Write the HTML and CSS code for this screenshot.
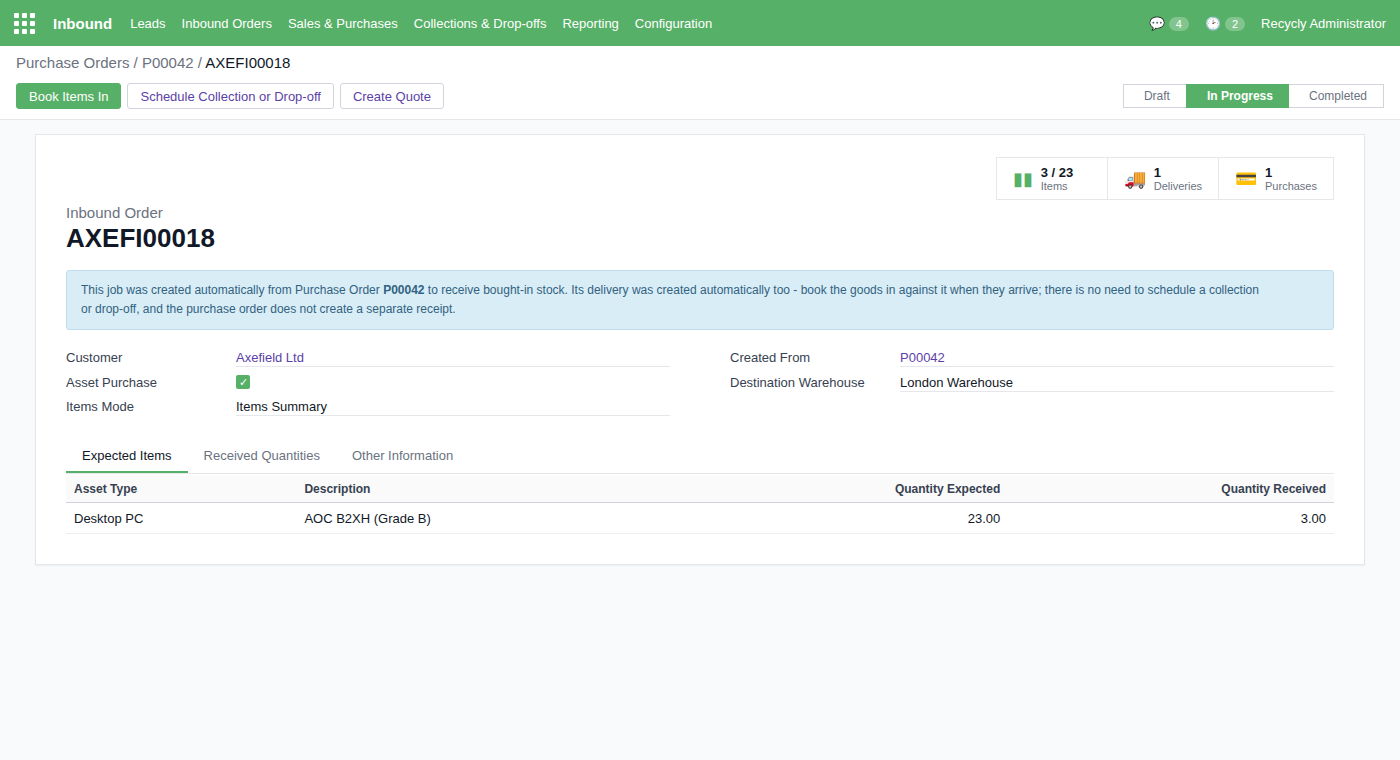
FILE: index.html
```html
<!DOCTYPE html>
<html lang="en">
<head>
<meta charset="UTF-8">
<meta name="viewport" content="width=device-width, initial-scale=1.0">
<title>AXEFI00018 - Inbound</title>
<link rel="stylesheet" href="styles.css">
</head>
<body>
  <!-- Top navigation -->
  <header class="navbar">
    <button type="button" class="apps" aria-label="Apps">
      <span></span><span></span><span></span>
      <span></span><span></span><span></span>
      <span></span><span></span><span></span>
    </button>
    <a class="brand" href="#">Inbound</a>
    <nav class="menu">
      <a href="#">Leads</a>
      <a href="#">Inbound Orders</a>
      <a href="#">Sales &amp; Purchases</a>
      <a href="#">Collections &amp; Drop-offs</a>
      <a href="#">Reporting</a>
      <a href="#">Configuration</a>
    </nav>
    <div class="systray">
      <a class="tray-item" href="#">💬 <span class="badge">4</span></a>
      <a class="tray-item" href="#">🕑 <span class="badge">2</span></a>
      <a href="#">Recycly Administrator</a>
    </div>
  </header>

  <!-- Breadcrumb, actions and status -->
  <div class="control-panel">
    <div class="breadcrumb">
      <a href="#">Purchase Orders</a> / <a href="#">P00042</a> / <span class="current">AXEFI00018</span>
    </div>
    <div class="actions">
      <div class="buttons">
        <button type="button" class="btn btn-primary">Book Items In</button>
        <button type="button" class="btn">Schedule Collection or Drop-off</button>
        <button type="button" class="btn">Create Quote</button>
      </div>
      <div class="statusbar">
        <button type="button" class="status">Draft</button>
        <button type="button" class="status active">In Progress</button>
        <button type="button" class="status">Completed</button>
      </div>
    </div>
  </div>

  <main class="sheet">
    <div class="stats">
      <button type="button" class="stat">
        <span class="stat-icon">▮▮</span>
        <span class="stat-text"><strong>3 / 23</strong><span>Items</span></span>
      </button>
      <button type="button" class="stat">
        <span class="stat-icon">🚚</span>
        <span class="stat-text"><strong>1</strong><span>Deliveries</span></span>
      </button>
      <button type="button" class="stat">
        <span class="stat-icon">💳</span>
        <span class="stat-text"><strong>1</strong><span>Purchases</span></span>
      </button>
    </div>

    <div class="subtitle">Inbound Order</div>
    <h1>AXEFI00018</h1>

    <div class="alert">
      This job was created automatically from Purchase Order <strong>P00042</strong> to receive bought-in stock. Its delivery was created automatically too - book the goods in against it when they arrive; there is no need to schedule a collection <span class="nowrap">or drop-off,</span> and the purchase order does not create a separate receipt.
    </div>

    <!-- Order details -->
    <div class="groups">
      <div class="group">
        <div class="field">
          <span class="label">Customer</span>
          <a class="value" href="#">Axefield Ltd</a>
        </div>
        <div class="field">
          <label class="label" for="assetPurchase">Asset Purchase</label>
          <input type="checkbox" id="assetPurchase" class="check" checked>
        </div>
        <div class="field">
          <span class="label">Items Mode</span>
          <span class="value">Items Summary</span>
        </div>
      </div>
      <div class="group">
        <div class="field">
          <span class="label">Created From</span>
          <a class="value" href="#">P00042</a>
        </div>
        <div class="field">
          <span class="label">Destination Warehouse</span>
          <span class="value">London Warehouse</span>
        </div>
      </div>
    </div>

    <div class="tabs" role="tablist">
      <button type="button" class="tab active" role="tab" aria-selected="true">Expected Items</button>
      <button type="button" class="tab" role="tab" aria-selected="false">Received Quantities</button>
      <button type="button" class="tab" role="tab" aria-selected="false">Other Information</button>
    </div>

    <table class="items">
      <thead>
        <tr>
          <th>Asset Type</th>
          <th>Description</th>
          <th class="num">Quantity Expected</th>
          <th class="num">Quantity Received</th>
        </tr>
      </thead>
      <tbody>
        <tr>
          <td>Desktop PC</td>
          <td>AOC B2XH (Grade B)</td>
          <td class="num">23.00</td>
          <td class="num">3.00</td>
        </tr>
      </tbody>
    </table>
  </main>
</body>
</html>
```
FILE: styles.css
```css
* {
  box-sizing: border-box;
}

body {
  margin: 0;
  font-family: "Liberation Sans", Arial, sans-serif;
  font-size: 13px;
  color: #111827;
  background-color: #f9fafb;
}

a {
  color: #5b3fa8;
  text-decoration: none;
}

button {
  font-family: inherit;
  cursor: pointer;
}

/* Navbar */
.navbar {
  display: flex;
  align-items: center;
  gap: 18px;
  height: 46px;
  padding: 0 14px;
  background-color: #57b067;
  color: #ffffff;
}

.navbar a {
  color: #ffffff;
}

.apps {
  display: grid;
  grid-template-columns: repeat(3, 5px);
  gap: 3px;
  padding: 0;
  border: none;
  background: none;
}

.apps span {
  height: 5px;
  border-radius: 1px;
  background-color: #ffffff;
}

.brand {
  font-size: 15px;
  font-weight: bold;
}

.menu,
.systray {
  display: flex;
  align-items: center;
  gap: 16px;
}

.systray {
  margin-left: auto;
}

.tray-item {
  display: flex;
  align-items: baseline;
  gap: 4px;
}

.badge {
  padding: 0 7px;
  border-radius: 8px;
  background-color: rgba(255, 255, 255, 0.25);
  font-size: 11px;
  line-height: 14px;
}

/* Control panel */
.control-panel {
  padding: 8px 16px 10px;
  border-bottom: 1px solid #e5e7eb;
  background-color: #ffffff;
}

.breadcrumb {
  margin-bottom: 12px;
  font-size: 15px;
  line-height: 17px;
  color: #6b7280;
}

.breadcrumb a {
  color: #6b7280;
}

.breadcrumb .current {
  color: #111827;
}

.actions {
  display: flex;
  justify-content: space-between;
  align-items: center;
}

.buttons {
  display: flex;
  gap: 6px;
}

.btn {
  height: 26px;
  padding: 0 12px;
  border: 1px solid #d1d5db;
  border-radius: 3px;
  background-color: #ffffff;
  color: #5b3fa8;
  font-size: 13px;
}

.btn-primary {
  border-color: #57b067;
  background-color: #57b067;
  color: #ffffff;
}

.statusbar {
  display: flex;
}

.status {
  height: 24px;
  padding: 0 16px 0 20px;
  border: 1px solid #d1d5db;
  border-right: none;
  background-color: #ffffff;
  color: #6b7280;
  font-size: 12px;
}

.status:last-child {
  border-left: none;
  border-right: 1px solid #d1d5db;
}

.status.active {
  border-color: #57b067;
  background-color: #57b067;
  color: #ffffff;
  font-weight: bold;
}

/* Sheet */
.sheet {
  width: 95%;
  margin: 14px auto;
  padding: 22px 30px 30px;
  border: 1px solid #e5e7eb;
  background-color: #ffffff;
  box-shadow: 0 1px 2px rgba(0, 0, 0, 0.05);
}

.stats {
  display: flex;
  justify-content: flex-end;
  margin-bottom: 4px;
}

.stat {
  display: flex;
  align-items: center;
  gap: 8px;
  min-width: 111px;
  padding: 8px 16px 6px;
  border: 1px solid #e5e7eb;
  border-right: none;
  background-color: #ffffff;
  text-align: left;
}

.stat:last-child {
  border-right: 1px solid #e5e7eb;
}

.stat-icon {
  margin-bottom: 2px;
  color: #57b067;
  font-size: 18px;
  line-height: 20px;
}

.stat-text {
  display: flex;
  flex-direction: column;
  font-size: 11px;
  line-height: 13px;
  color: #6b7280;
}

.stat-text strong {
  font-size: 13px;
  line-height: 14px;
  color: #111827;
}

.subtitle {
  font-size: 15px;
  line-height: 18px;
  color: #6b7280;
}

h1 {
  margin: 1px 0 17px;
  font-size: 26px;
  line-height: 30px;
}

.alert {
  padding: 10px 14px;
  border: 1px solid #c0dcee;
  border-radius: 3px;
  background-color: #d9edf7;
  color: #31627f;
  font-size: 12px;
  line-height: 19px;
}

.nowrap {
  white-space: nowrap;
}

/* Field groups */
.groups {
  display: grid;
  grid-template-columns: 1fr 1fr;
  gap: 60px;
  margin: 18px 0 23px;
}

.group {
  display: flex;
  flex-direction: column;
  gap: 6px;
}

.field {
  display: grid;
  grid-template-columns: 170px 1fr;
  align-items: center;
  min-height: 18px;
}

.label {
  color: #374151;
}

.value {
  padding: 2px 0 1px;
  border-bottom: 1px solid #e5e7eb;
}

.check {
  display: flex;
  justify-content: center;
  align-items: center;
  appearance: none;
  width: 14px;
  height: 14px;
  margin: 0;
  border-radius: 2px;
  background-color: #57b067;
}

.check::before {
  content: "✓";
  color: #ffffff;
  font-size: 11px;
}

/* Tabs */
.tabs {
  display: flex;
  border-bottom: 1px solid #e5e7eb;
}

.tab {
  padding: 9px 16px 8px;
  border: none;
  border-bottom: 2px solid transparent;
  background: none;
  color: #6b7280;
  font-size: 13px;
}

.tab.active {
  border-bottom-color: #57b067;
  color: #111827;
}

.items {
  width: 100%;
  margin-top: 2px;
  border-collapse: collapse;
}

.items th,
.items td {
  padding: 7px 8px;
  text-align: left;
}

.items th {
  padding: 6px 8px;
  border-bottom: 1px solid #d1d5db;
  background-color: #fafafa;
  color: #374151;
  font-size: 12px;
}

.items td {
  padding-top: 8px;
  border-bottom: 1px solid #eceef0;
}

.items .num {
  text-align: right;
}
```
